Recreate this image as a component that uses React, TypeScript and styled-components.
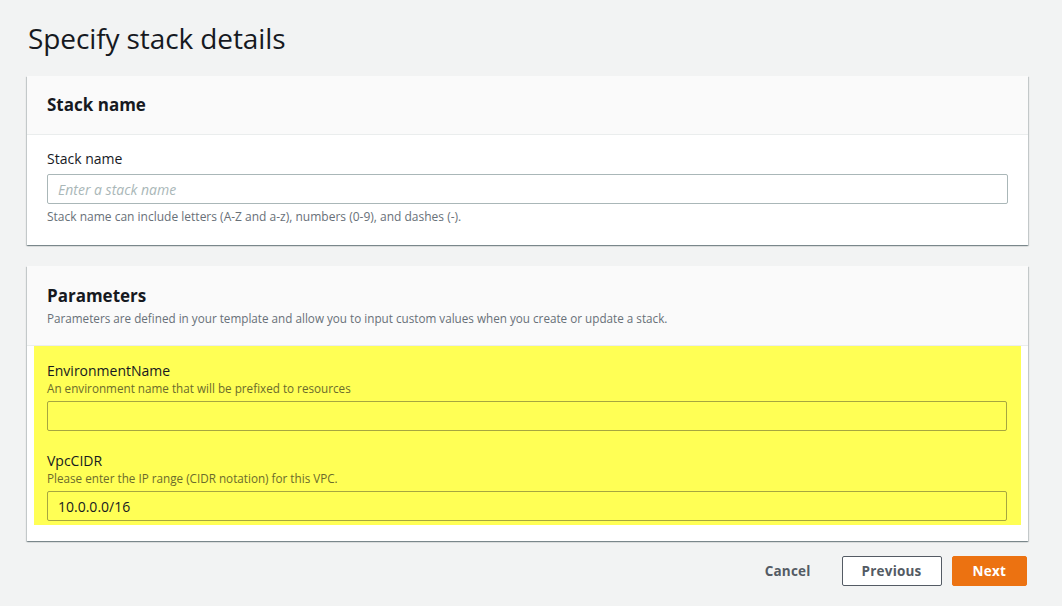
import React from "react";
import styled, { createGlobalStyle } from "styled-components";

const GlobalStyle = createGlobalStyle`
	html, body {
		margin: 0;
		padding: 0;
		background: #f2f3f3;
		font-family: "Open Sans", "Noto Sans", Arial, sans-serif;
		color: #16191f;
	}
`;

const Page = styled.div`
	width: 1062px;
	height: 606px;
	box-sizing: border-box;
	padding: 20px 34px 0 27px;
	overflow: hidden;
`;

const Title = styled.h1`
	margin: 0 0 20px 1px;
	font-size: 28px;
	font-weight: 400;
	line-height: 36px;
	letter-spacing: -0.1px;
`;

const Panel = styled.section`
	background: #ffffff;
	box-shadow: 0 1px 1px 0 rgba(0, 28, 36, 0.3), 1px 1px 1px 0 rgba(0, 28, 36, 0.15),
		-1px 1px 1px 0 rgba(0, 28, 36, 0.15);
	margin-bottom: ${(p: { $gap: number }) => p.$gap}px;
`;

const PanelHeader = styled.header`
	background: #fafafa;
	border-bottom: 1px solid #eaeded;
	padding: ${(p: { $withDesc?: boolean }) => (p.$withDesc ? "17px 20px 19px" : "16px 20px 17px")};
`;

const PanelTitle = styled.h2`
	margin: 0;
	font-size: 17px;
	font-weight: 700;
	line-height: 25px;
`;

const PanelDesc = styled.p`
	margin: 2px 0 0;
	font-size: 11.7px;
	line-height: 16px;
	color: #687078;
`;

const PanelBody = styled.div`
	padding: ${(p: { $pad: string }) => p.$pad};
`;

const Highlight = styled.div`
	background: #ffff55;
	padding: 15px 14px 4px 13px;
`;

const Field = styled.div`
	margin-bottom: ${(p: { $gap?: number }) => (p.$gap ?? 0)}px;
`;

const Label = styled.label<{ $lh: number }>`
	display: block;
	font-size: 14px;
	line-height: ${(p) => p.$lh}px;
	color: #16191f;
`;

const Desc = styled.div`
	font-size: 11.7px;
	line-height: 14px;
	margin-bottom: 6px;
	color: #6b6b2c;
`;

const Hint = styled.div`
	margin-top: 5px;
	font-size: 12px;
	line-height: 16px;
	color: #687078;
`;

const Input = styled.input<{ $hl?: boolean }>`
	display: block;
	box-sizing: border-box;
	width: 100%;
	height: 30px;
	margin-top: ${(p) => (p.$hl ? "0" : "4px")};
	padding: 0 10px;
	border: 1px solid ${(p) => (p.$hl ? "#a6a640" : "#aab7b8")};
	border-radius: 2px;
	background: ${(p) => (p.$hl ? "transparent" : "#ffffff")};
	font-family: inherit;
	font-size: 14px;
	color: #16191f;
	outline: none;

	&::placeholder {
		color: #aab7b8;
		font-style: italic;
	}
`;

const Actions = styled.div`
	display: flex;
	justify-content: flex-end;
	align-items: center;
	gap: 10px;
	margin-right: 1px;
`;

const Button = styled.button<{ $variant: "link" | "normal" | "primary" }>`
	box-sizing: border-box;
	height: 30px;
	padding: 0 ${(p) => (p.$variant === "normal" ? "18px" : "20px")};
	border-radius: 2px;
	font-family: inherit;
	font-size: 13.5px;
	font-weight: 700;
	letter-spacing: 0.2px;
	cursor: pointer;
	border: 1px solid
		${(p) => (p.$variant === "normal" ? "#545b64" : p.$variant === "primary" ? "#ec7211" : "transparent")};
	background: ${(p) => (p.$variant === "primary" ? "#ec7211" : p.$variant === "normal" ? "#ffffff" : "transparent")};
	color: ${(p) => (p.$variant === "primary" ? "#ffffff" : "#545b64")};
	min-width: ${(p) => (p.$variant === "normal" ? "100px" : "auto")};
`;

export default function App() {
	return (
		<>
			<GlobalStyle />
			<Page>
				<Title>Specify stack details</Title>

				<Panel $gap={21}>
					<PanelHeader>
						<PanelTitle>Stack name</PanelTitle>
					</PanelHeader>
					<PanelBody $pad="13px 20px 20px">
						<Label $lh={22}>Stack name</Label>
						<Input placeholder="Enter a stack name" />
						<Hint>Stack name can include letters (A-Z and a-z), numbers (0-9), and dashes (-).</Hint>
					</PanelBody>
				</Panel>

				<Panel $gap={15}>
					<PanelHeader $withDesc>
						<PanelTitle>Parameters</PanelTitle>
						<PanelDesc>
							Parameters are defined in your template and allow you to input custom values when you
							create or update a stack.
						</PanelDesc>
					</PanelHeader>
					<PanelBody $pad="0 7px 16px">
						<Highlight>
							<Field $gap={20}>
								<Label $lh={20}>EnvironmentName</Label>
								<Desc>An environment name that will be prefixed to resources</Desc>
								<Input $hl />
							</Field>
							<Field>
								<Label $lh={20}>VpcCIDR</Label>
								<Desc>Please enter the IP range (CIDR notation) for this VPC.</Desc>
								<Input $hl defaultValue="10.0.0.0/16" />
							</Field>
						</Highlight>
					</PanelBody>
				</Panel>

				<Actions>
					<Button $variant="link">Cancel</Button>
					<Button $variant="normal">Previous</Button>
					<Button $variant="primary">Next</Button>
				</Actions>
			</Page>
		</>
	);
}
